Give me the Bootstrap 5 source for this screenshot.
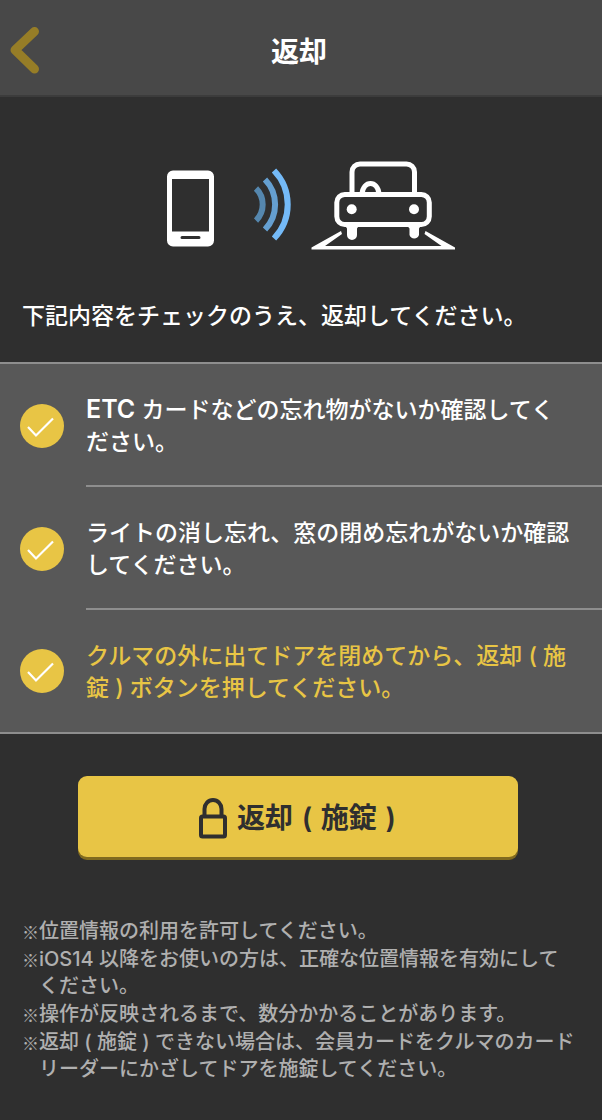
<!DOCTYPE html>
<html lang="ja">
<head>
<meta charset="utf-8">
<meta name="viewport" content="width=device-width, initial-scale=1">
<title>返却</title>
<link href="https://cdn.jsdelivr.net/npm/bootstrap@5.3.0/dist/css/bootstrap.min.css" rel="stylesheet">
<style>
  body {
    background: #2f2f2f;
    color: #fff;
    font-family: Inter, "Noto Sans CJK JP", sans-serif;
    font-weight: 500;
  }
  .app-header {
    background: #484848;
    border-bottom: 2px solid #3c3c3c;
    height: 97px;
    padding-right: 4px;
  }
  .app-title { font-size: 28px; line-height: 40px; font-weight: 700; }
  .back-link { left: 10px; top: 26px; line-height: 0; }
  .hero { padding-top: 64px; }
  .intro { font-size: 23px; line-height: 32px; padding: 47px 22px 30px; }
  .check-list {
    background: #585858;
    border-top: 2px solid #8e8e8e;
    border-bottom: 2px solid #8e8e8e;
  }
  .check-row { padding-left: 20px; gap: 22px; }
  .check-row .form-check-input {
    width: 44px;
    height: 44px;
    border: 0;
    border-radius: 50%;
    background-color: #e8c545;
  }
  .check-row .form-check-input:checked {
    background-color: #e8c545;
    background-size: 44px 44px;
    background-image: url("data:image/svg+xml,%3Csvg xmlns='http://www.w3.org/2000/svg' viewBox='0 0 44 44'%3E%3Cpath d='M8 23l8 8.500 17-17' fill='none' stroke='%23fff' stroke-width='2.2'/%3E%3C/svg%3E");
  }
  .check-text {
    font-size: 23px;
    line-height: 32px;
    padding: 30px 30px 27px 0;
  }
  .check-row:not(:last-child) .check-text { border-bottom: 2px solid #8e8e8e; }
  .check-row:last-child .check-text { padding-bottom: 28px; }
  .check-text.final { color: #e8c545; }
  .latin { font-size: 25px; font-weight: 600; line-height: 1; }
  .action { padding: 42px 84px 0 78px; }
  .btn-return {
    --bs-btn-bg: #e8c545;
    --bs-btn-color: #2f2f2f;
    --bs-btn-hover-bg: #dcb938;
    --bs-btn-hover-color: #2f2f2f;
    --bs-btn-active-bg: #d0ad30;
    --bs-btn-active-color: #2f2f2f;
    --bs-btn-font-weight: 700;
    border: 0;
    border-radius: 9px;
    box-shadow: 0 3px 0 #806a1f;
    font-size: 28px;
    line-height: 40px;
    padding: 21px 0 18px;
    gap: 9px;
  }
  .paren { padding: 0 2px; font-weight: 600; }
  .notes {
    color: #b0b0b0;
    font-size: 20px;
    line-height: 27px;
    padding: 61px 26px 36px 22px;
    gap: 1px;
  }
  .note-mark { width: 17px; font-size: 17px; font-family: "Noto Sans CJK JP", sans-serif; }
</style>
</head>
<body>
<header class="app-header position-relative d-flex align-items-center justify-content-center">
  <a href="#" class="back-link position-absolute" aria-label="戻る">
    <svg width="30" height="48" viewBox="0 0 30 48" fill="none" stroke="#967d27" stroke-width="9" stroke-linecap="round" stroke-linejoin="round"><path d="M24.500 5.500 5 24 24.500 43"/></svg>
  </a>
  <h1 class="app-title m-0 pt-2">返却</h1>
</header>

<main>
  <div class="hero d-flex justify-content-center">
    <svg width="302" height="92" viewBox="-6 0 302 92" overflow="visible" role="img" aria-label="スマートフォンからクルマへ通信">
      <path fill="#fff" fill-rule="evenodd" d="M17 9.500h35a6 6 0 0 1 6 6v64a6 6 0 0 1-6 6H17a6 6 0 0 1-6-6v-64a6 6 0 0 1 6-6zM16 18v52.500h37V18zM26 75a1.500 1.500 0 0 0 0 3h17a1.500 1.500 0 0 0 0-3z"/>
      <g fill="none" stroke-width="6">
        <path stroke="#5587ae" d="M100 27.500a22.500 22.500 0 0 1 0 32"/>
        <path stroke="#659fd0" d="M109 18.500a36 36 0 0 1 0 50"/>
        <path stroke="#74baf8" d="M118 9.500a49 49 0 0 1 0 68"/>
      </g>
      <g fill="none" stroke="#fff" stroke-width="5">
        <path d="M196 33V11a8 8 0 0 1 8-8h46.500a8 8 0 0 1 8 8v22"/>
        <path d="M206 33c1-14 16-14 17 0"/>
        <rect x="180.800" y="33.500" width="92.500" height="30" rx="8"/>
      </g>
      <g fill="#fff">
        <circle cx="195.700" cy="48.300" r="5"/><circle cx="258" cy="48.300" r="5"/>
        <path d="M189 64.500h14l-2 3v6.500a5 5 0 0 1-10 0v-6.500zM251 64.500h14l-2 3v6.500a5 5 0 0 1-9.500 0v-6.500z"/>
        <path d="M155.500 86.500 185 70 186 73 169 85H285.500L268.500 73 269.500 70 299 86.500V88.500H155.500z"/>
      </g>
    </svg>
  </div>
  <p class="intro m-0">下記内容をチェックのうえ、返却してください。</p>

  <div class="check-list">
    <div class="check-row d-flex align-items-center">
      <input class="form-check-input flex-shrink-0 m-0" type="checkbox" id="check1" checked>
      <label class="check-text flex-grow-1" for="check1"><span class="latin">ETC</span> カードなどの忘れ物がないか確認してください。</label>
    </div>
    <div class="check-row d-flex align-items-center">
      <input class="form-check-input flex-shrink-0 m-0" type="checkbox" id="check2" checked>
      <label class="check-text flex-grow-1" for="check2">ライトの消し忘れ、窓の閉め忘れがないか確認してください。</label>
    </div>
    <div class="check-row d-flex align-items-center">
      <input class="form-check-input flex-shrink-0 m-0" type="checkbox" id="check3" checked>
      <label class="check-text final flex-grow-1" for="check3">クルマの外に出てドアを閉めてから、返却 ( 施錠 ) ボタンを押してください。</label>
    </div>
  </div>

  <div class="action">
    <button type="button" class="btn btn-return w-100 d-flex align-items-center justify-content-center">
      <svg width="30" height="42" viewBox="0 0 30 42" fill="none" stroke="#2f2f2f" stroke-width="4"><rect x="3" y="19.500" width="24" height="20" rx="1.500"/><path d="M6.500 19V12a8.500 9 0 0 1 17 0v7"/></svg>
      <span>返却 <span class="paren">(</span> 施錠 <span class="paren">)</span></span>
    </button>
  </div>

  <ul class="notes list-unstyled d-flex flex-column m-0">
    <li class="d-flex"><span class="note-mark flex-shrink-0">※</span><span>位置情報の利用を許可してください。</span></li>
    <li class="d-flex"><span class="note-mark flex-shrink-0">※</span><span>iOS14 以降をお使いの方は、正確な位置情報を有効にしてください。</span></li>
    <li class="d-flex"><span class="note-mark flex-shrink-0">※</span><span>操作が反映されるまで、数分かかることがあります。</span></li>
    <li class="d-flex"><span class="note-mark flex-shrink-0">※</span><span>返却 ( 施錠 ) できない場合は、会員カードをクルマのカードリーダーにかざしてドアを施錠してください。</span></li>
  </ul>
</main>
<script src="https://cdn.jsdelivr.net/npm/bootstrap@5.3.0/dist/js/bootstrap.bundle.min.js"></script>
</body>
</html>
